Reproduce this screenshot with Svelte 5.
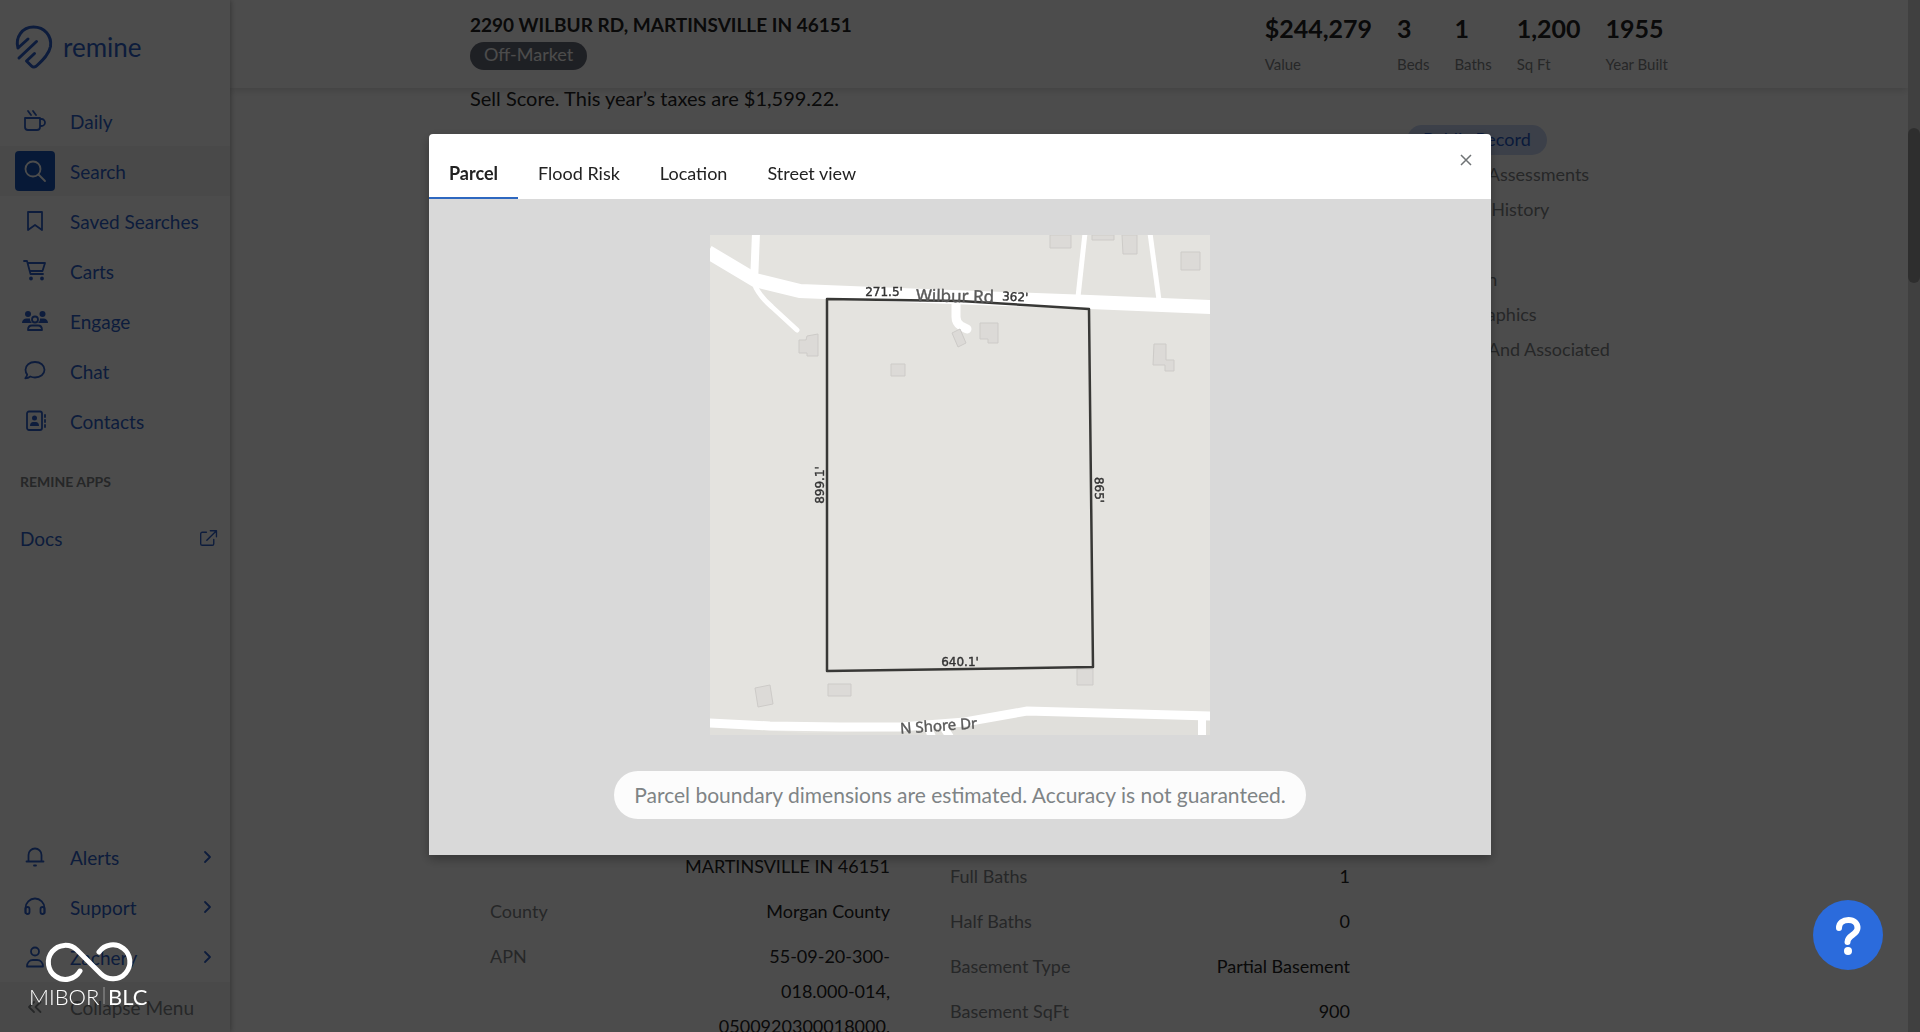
<script>
  import { onMount } from "svelte";

  const navItems = [
    { label: "Daily", icon: "cup" },
    { label: "Search", icon: "search", active: true },
    { label: "Saved Searches", icon: "bookmark" },
    { label: "Carts", icon: "cart" },
    { label: "Engage", icon: "users" },
    { label: "Chat", icon: "chat" },
    { label: "Contacts", icon: "contacts" }
  ];

  const footerItems = [
    { label: "Alerts", icon: "bell" },
    { label: "Support", icon: "headphones" },
    { label: "Zachery", icon: "user" }
  ];

  const stats = [
    { value: "$244,279", label: "Value" },
    { value: "3", label: "Beds" },
    { value: "1", label: "Baths" },
    { value: "1,200", label: "Sq Ft" },
    { value: "1955", label: "Year Built" }
  ];

  const sections = [
    "Taxes & Assessments",
    "Transfer History",
    "Interior",
    "Valuation",
    "Demographics",
    "Schools And Associated"
  ];

  // each value is a list of lines
  const address = [
    { label: "", value: ["MARTINSVILLE IN 46151"] },
    { label: "County", value: ["Morgan County"] },
    { label: "APN", value: ["55-09-20-300-", "018.000-014,", "0500920300018000,"] }
  ];

  const building = [
    { label: "Full Baths", value: ["1"] },
    { label: "Half Baths", value: ["0"] },
    { label: "Basement Type", value: ["Partial Basement"] },
    { label: "Basement SqFt", value: ["900"] }
  ];

  const tabs = ["Parcel", "Flood Risk", "Location", "Street view"];

  let activeTab = "Parcel";
  let open = true;

  const close = () => {
    open = false;
  };

  onMount(() => {
    document.title = "Remine";
  });
</script>

<style>
  :global(body) {
    background: white;
    color: #222;
    font-family: Lato, "Open Sans", sans-serif;
    font-size: 18px;
  }

  * {
    box-sizing: border-box;
  }

  button {
    background: none;
    border: none;
    color: inherit;
    cursor: pointer;
    font: inherit;
    margin: 0;
    padding: 0;
  }

  a {
    color: inherit;
    text-decoration: none;
  }

  ul,
  dl,
  dd,
  h1,
  h2,
  p {
    margin: 0;
    padding: 0;
  }

  ul {
    list-style: none;
  }

  .app {
    display: flex;
    height: 100vh;
    overflow: hidden;
  }

  /* sidebar */
  .sidebar {
    box-shadow: 0 0 6px rgba(0, 0, 0, 0.4);
    color: #2d5fc8;
    display: flex;
    flex: none;
    flex-direction: column;
    font-size: 19px;
    width: 230px;
    z-index: 2;
  }

  .brand {
    align-items: center;
    display: flex;
    font-size: 26px;
    gap: 8px;
    height: 96px;
    line-height: 32px;
    padding: 0 0 2px 13px;
  }

  .brand svg {
    height: 44px;
    width: 42px;
  }

  .item {
    align-items: center;
    display: flex;
    gap: 15px;
    height: 50px;
    padding: 0 15px;
    text-align: left;
    width: 100%;
  }

  .item.active {
    background: #f5f5f5;
  }

  .tile {
    align-items: center;
    border-radius: 4px;
    display: flex;
    flex: none;
    height: 40px;
    justify-content: center;
    width: 40px;
  }

  .active .tile {
    background: #1a56b8;
    color: white;
  }

  .icon {
    fill: none;
    height: 24px;
    stroke: currentColor;
    stroke-linecap: round;
    stroke-linejoin: round;
    stroke-width: 1.8;
    width: 26px;
  }

  .label {
    flex: 1;
  }

  .icon.chevron {
    height: 14px;
    width: 14px;
  }

  .apps {
    color: #7f8486;
    font-size: 14px;
    font-weight: 700;
    line-height: 20px;
    padding: 26px 20px 21px;
  }

  .docs {
    padding: 0 12px 0 20px;
  }

  .docs .icon {
    height: 20px;
    width: 20px;
  }

  .bottom {
    margin-top: auto;
  }

  .collapse {
    background: #f5f5f5;
    color: #7f8486;
  }

  /* main column */
  .main {
    flex: 1;
    min-width: 0;
    overflow: hidden;
  }

  .wrap {
    margin: 0 auto;
    max-width: 1198px;
  }

  .header {
    box-shadow: 0 2px 8px rgba(0, 0, 0, 0.15);
    height: 88px;
  }

  .header .wrap {
    display: flex;
    justify-content: space-between;
    padding-top: 12px;
  }

  h1 {
    font-size: 19px;
    line-height: 26px;
  }

  .status {
    background: #676b78;
    border-radius: 14px;
    color: white;
    display: inline-block;
    height: 28px;
    line-height: 25px;
    margin-top: 4px;
    padding: 0 14px;
  }

  .stats {
    display: flex;
    gap: 25px;
  }

  .stats dd {
    font-size: 25px;
    font-weight: 700;
    line-height: 32px;
  }

  .stats div {
    display: flex;
    flex-direction: column-reverse;
    justify-content: flex-end;
  }

  .stats dt {
    color: #7f8486;
    font-size: 15px;
    line-height: 20px;
    margin-top: 10px;
  }

  .body {
    align-items: flex-start;
    display: flex;
    gap: 37px;
  }

  .report {
    flex: 1;
    max-width: 900px;
  }

  .summary {
    font-size: 20px;
    line-height: 20px;
  }

  .details {
    align-items: start;
    display: grid;
    gap: 20px;
    grid-template-columns: 1fr 1fr;
    margin-top: 741px;
  }

  .details dl {
    display: flex;
    flex-direction: column;
    gap: 10px;
    padding: 0 20px;
  }

  .details dl:last-child {
    padding-top: 10px;
  }

  .details dl div {
    display: flex;
    justify-content: space-between;
    line-height: 35px;
  }

  .details dt {
    color: #7f8486;
  }

  .details dd {
    text-align: right;
    white-space: nowrap;
  }

  .details span {
    display: block;
  }

  .sections {
    color: #7f8486;
    line-height: 35px;
    margin-top: 34px;
    width: 256px;
  }

  .sections a {
    padding-left: 16px;
  }

  .sections .current {
    background: #c8d6f5;
    border-radius: 16px;
    color: #2559c4;
    display: inline-block;
    height: 30px;
    line-height: 29px;
    margin: 3px 0 2px;
    padding: 0 16px;
    vertical-align: top;
  }

  .scrollbar {
    background: #d6d6d6;
    flex: none;
    padding-top: 128px;
    width: 12px;
  }

  .thumb {
    background: #9c9c9c;
    border-radius: 6px;
    height: 155px;
  }

  /* dialog */
  .overlay {
    align-items: flex-start;
    background: rgba(0, 0, 0, 0.7);
    display: flex;
    inset: 0;
    justify-content: center;
    padding: 134px 20px 0;
    position: fixed;
    z-index: 3;
  }

  .modal {
    background: white;
    border-radius: 4px 4px 0 0;
    box-shadow: 0 4px 12px rgba(0, 0, 0, 0.3);
    max-width: 1062px;
    width: 100%;
  }

  .modal-header {
    align-items: flex-end;
    display: flex;
    height: 65px;
    justify-content: space-between;
  }

  .tabs {
    display: flex;
  }

  .tabs button {
    border-bottom: 2px solid transparent;
    height: 50px;
    padding: 0 20px;
  }

  .tabs .selected {
    border-color: #2e68c0;
    font-weight: 700;
  }

  .close {
    align-self: flex-start;
    color: #6f7375;
    height: 50px;
    width: 50px;
  }

  .close svg {
    height: 12px;
    stroke: currentColor;
    stroke-width: 1.5;
    width: 12px;
  }

  .modal-body {
    align-items: center;
    background: #d9d9d9;
    display: flex;
    flex-direction: column;
    gap: 36px;
    padding: 36px;
  }

  .map {
    display: block;
    max-width: 100%;
    width: 500px;
  }

  .road {
    fill: none;
    stroke: white;
  }

  .houses {
    fill: #dcdad7;
    stroke: #cdcbc8;
  }

  .parcel {
    fill: none;
    stroke: #383836;
    stroke-linejoin: round;
    stroke-width: 2.5;
  }

  .measure {
    fill: #333;
    font-family: "DejaVu Sans", sans-serif;
    font-size: 12px;
    stroke: #333;
    stroke-width: 0.4;
    text-anchor: middle;
  }

  .street {
    fill: #5a5a5a;
    font-family: "Noto Sans", sans-serif;
    font-size: 17px;
    stroke: #5a5a5a;
    stroke-width: 0.4;
    text-anchor: middle;
  }

  .street.minor {
    font-size: 15px;
  }

  .notice {
    background: #fcfcfc;
    border-radius: 24px;
    color: #7f8486;
    font-size: 21px;
    line-height: 48px;
    padding: 0 20px;
  }

  /* floating pieces */
  .mls {
    bottom: 22px;
    left: 28px;
    position: fixed;
    width: 122px;
    z-index: 4;
  }

  .help {
    background: #2b6bdc;
    border-radius: 50%;
    bottom: 62px;
    height: 70px;
    position: fixed;
    right: 37px;
    width: 70px;
    z-index: 4;
  }

  .help svg {
    display: block;
    height: 70px;
    width: 70px;
  }
</style>

{#snippet icon(name)}
  <svg class="icon" viewBox="0 0 26 24" aria-hidden="true">
    {#if name === "cup"}
      <path d="M3 9h15v9a3 3 0 0 1-3 3H6a3 3 0 0 1-3-3zM18 10h1.500a3 3 0 0 1 0 7H18M6 2l3 4M11 2l3 4" />
    {:else if name === "search"}
      <circle cx="11" cy="10" r="7.500" />
      <path d="M16.500 15.500L23 22" />
    {:else if name === "bookmark"}
      <path d="M6 3h14v18l-7-5-7 5z" />
    {:else if name === "cart"}
      <path d="M2 2h3l3.500 13H21M5.500 4H23l-2.500 8H8" />
      <circle cx="9" cy="19.500" r="1" />
      <circle cx="20" cy="19.500" r="1" />
    {:else if name === "users"}
      <g fill="currentColor" stroke="none">
        <circle cx="6" cy="5" r="3" />
        <circle cx="20.500" cy="5" r="3" />
        <path d="M0 14c0-3 2-4.500 4.500-4.500H8c0 2 .5 3 2 4.500zM26 14c0-3-2-4.500-4.500-4.500H18c0 2-.5 3-2 4.500z" />
      </g>
      <circle cx="13" cy="10.500" r="3" />
      <path d="M6 21c0-3 2-4.500 4-4.500h6c2 0 4 1.500 4 4.500z" />
    {:else if name === "chat"}
      <path d="M13 3c5.500 0 9.500 3.500 9.500 7.800s-4 7.700-9.500 7.700c-1.700 0-3.300-.4-4.700-1-1.400 1.200-3 1.800-5 1.800 1-1.200 1.700-2.300 1.900-3.700-1-1.300-1.700-3-1.700-4.800C3.500 6.500 7.500 3 13 3z" />
    {:else if name === "contacts"}
      <rect x="5" y="2.500" width="15" height="18.500" rx="2" />
      <path d="M23 6v2M23 11v2M23 16v2" />
      <g fill="currentColor" stroke="none">
        <circle cx="12.500" cy="9" r="2.500" />
        <path d="M8 17c0-3 1.500-4 3-4h3c1.500 0 3 1 3 4z" />
      </g>
    {:else if name === "bell"}
      <path d="M4.500 16.500h17M6.500 16V10a6.500 6.500 0 0 1 13 0v6M12 20.500h2" />
    {:else if name === "headphones"}
      <path d="M3.500 18v-5a9.500 9.500 0 0 1 19 0v5" />
      <rect x="3.500" y="12" width="4" height="7" rx="2" />
      <rect x="18.500" y="12" width="4" height="7" rx="2" />
    {:else if name === "user"}
      <circle cx="13" cy="6.500" r="4" />
      <path d="M5 21.500c0-4 2.500-6.500 6-6.500h4c3.500 0 6 2.500 6 6.500z" />
    {:else if name === "external"}
      <path d="M11 4.500H5.500a2 2 0 0 0-2 2v13a2 2 0 0 0 2 2h13a2 2 0 0 0 2-2V14M16 2.500h8v8M24 2.500L11.500 15" />
    {:else if name === "collapse"}
      <path d="M12 7l-5 5 5 5M18.500 7l-5 5 5 5" />
    {/if}
  </svg>
{/snippet}

<div class="app">
  <nav class="sidebar">
    <a class="brand" href="/">
      <svg viewBox="0 0 42 44" fill="none" stroke="currentColor" stroke-width="3" stroke-linecap="round" stroke-linejoin="round" aria-hidden="true">
        <path d="M5 26.500C2 16 9 5.500 20.500 5.500c11 0 18.500 9 17 19.500-1.500 8-8 14-13.500 19-2 2-4 2-5.500.5l-5-5 8-7.500M5 26.500l10-9M6 36.500l17.500-16.500" transform="translate(0 -3.500)" />
      </svg>
      remine
    </a>
    <ul>
      {#each navItems as item}
        <li>
          <a class="item" class:active={item.active} href="#{item.icon}">
            <span class="tile">{@render icon(item.icon)}</span>
            <span class="label">{item.label}</span>
          </a>
        </li>
      {/each}
    </ul>
    <h2 class="apps">REMINE APPS</h2>
    <a class="item docs" href="#docs">
      <span class="label">Docs</span>
      {@render icon("external")}
    </a>
    <div class="bottom">
      {#each footerItems as item}
        <button class="item">
          <span class="tile">{@render icon(item.icon)}</span>
          <span class="label">{item.label}</span>
          <svg class="icon chevron" viewBox="0 0 14 14" aria-hidden="true">
            <path d="M4 2l5 5-5 5" />
          </svg>
        </button>
      {/each}
      <button class="item collapse">
        <span class="tile">{@render icon("collapse")}</span>
        <span class="label">Collapse Menu</span>
      </button>
    </div>
  </nav>

  <main class="main">
    <header class="header">
      <div class="wrap">
        <div>
          <h1>2290 WILBUR RD, MARTINSVILLE IN 46151</h1>
          <span class="status">Off-Market</span>
        </div>
        <dl class="stats">
          {#each stats as stat}
            <div>
              <dt>{stat.label}</dt>
              <dd>{stat.value}</dd>
            </div>
          {/each}
        </dl>
      </div>
    </header>

    <div class="wrap body">
      <div class="report">
        <p class="summary">Sell Score. This year’s taxes are $1,599.22.</p>
        <div class="details">
          {#each [address, building] as group}
            <dl>
              {#each group as row}
                <div>
                  <dt>{row.label}</dt>
                  <dd>
                    {#each row.value as line}
                      <span>{line}</span>
                    {/each}
                  </dd>
                </div>
              {/each}
            </dl>
          {/each}
        </div>
      </div>
      <ul class="sections">
        <li><a class="current" href="#public-record">Public Record</a></li>
        {#each sections as section}
          <li><a href="#section">{section}</a></li>
        {/each}
      </ul>
    </div>
  </main>

  <div class="scrollbar"><div class="thumb"></div></div>
</div>

{#if open}
  <div class="overlay">
    <div class="modal" role="dialog" aria-modal="true" aria-label="Parcel">
      <div class="modal-header">
        <div class="tabs" role="tablist">
          {#each tabs as tab}
            <button
              role="tab"
              class:selected={tab === activeTab}
              aria-selected={tab === activeTab}
              on:click={() => (activeTab = tab)}>
              {tab}
            </button>
          {/each}
        </div>
        <button class="close" aria-label="Close" on:click={close}>
          <svg viewBox="0 0 12 12" aria-hidden="true"><path d="M1 1l10 10M11 1L1 11" /></svg>
        </button>
      </div>
      <div class="modal-body">
        <svg class="map" viewBox="0 0 500 500" role="img" aria-label="Parcel map">
          <rect width="500" height="500" fill="#e4e3df" />
          <path d="M0 492L95 498 200 496 300 480 320 478 500 483V500H0z" fill="#e0dfdb" />
          <g class="road">
            <path d="M-2 17L45 45 90 56 215 61 380 67 502 72" stroke-width="14" />
            <path d="M46 -2L44 48" stroke-width="8" />
            <path d="M44 48Q48 60 62 72L87 95" stroke-width="5" stroke-linecap="round" />
            <path d="M246 68V82Q246 88 251 91L257 94" stroke-width="9" stroke-linecap="round" />
            <path d="M375 -2L368 62" stroke-width="5" />
            <path d="M440 -2L449 65" stroke-width="5" />
            <path d="M-2 488L60 491 130 492 190 492 255 487 317 476 502 481" stroke-width="9" />
            <path d="M492 481V502" stroke-width="8" />
            <path d="M218 492l4 10M232 490l8 12" stroke-width="8" />
          </g>
          <g class="houses">
            <path d="M89 105h7l1-4 11-2v22H97v-3h-8z" />
            <path d="M181 129h14v12H181z" />
            <path d="M242 98l8-4 6 14-8 4z" />
            <path d="M270 88h18v20h-10v-4h-8z" />
            <path d="M340 0h21v13h-21zM382 0h22v5h-22zM412 0h15v19h-14zM471 17h19v18H471z" />
            <path d="M444 109h12v16h8v11h-9v-6h-12z" />
            <path d="M45 453l15-3 3 19-15 3zM118 449h23v12h-23zM367 434h16v16h-16z" />
          </g>
          <path class="parcel" d="M117 64L250 66 379 74 383 432 117 436z" />
          <text class="street" x="245" y="67" transform="rotate(1 245 67)">Wilbur Rd</text>
          <text class="street minor" x="229" y="496" transform="rotate(-4 229 496)">N Shore Dr</text>
          <g class="measure">
            <text x="174" y="61">271.5'</text>
            <text x="305" y="66" transform="rotate(3 305 66)">362'</text>
            <text x="114" y="250" transform="rotate(-90 114 250)">899.1'</text>
            <text x="385" y="255" transform="rotate(89 385 255)">865'</text>
            <text x="250" y="431">640.1'</text>
          </g>
        </svg>
        <p class="notice">Parcel boundary dimensions are estimated. Accuracy is not guaranteed.</p>
      </div>
    </div>
  </div>
{/if}

<svg class="mls" viewBox="0 0 122 70" role="img" aria-label="MIBOR BLC">
  <g fill="none" stroke="white" stroke-width="5" stroke-linecap="round">
    <path d="M52 31A17 17 0 1 1 49 10L73 34A17 17 0 1 0 71 12" />
  </g>
  <text x="1" y="56" dominant-baseline="central" fill="white" font-size="22" font-weight="300">MIBOR</text>
  <path d="M76 47v17" stroke="#999" />
  <text x="80" y="56" dominant-baseline="central" fill="white" font-size="22">BLC</text>
</svg>

<button class="help" aria-label="Help">
  <svg viewBox="0 0 70 70" aria-hidden="true">
    <path d="M26 28c0-5 4-8 9.500-8s9 3.500 9 8c0 7-10 7-10 14" fill="none" stroke="white" stroke-width="6" stroke-linecap="round" />
    <circle cx="35" cy="51" r="4" fill="white" />
  </svg>
</button>
